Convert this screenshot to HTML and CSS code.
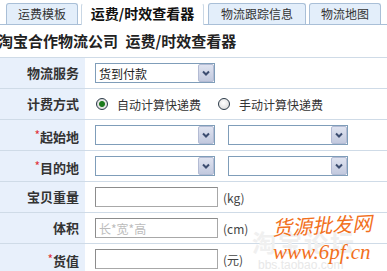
FILE: index.html
```html
<!DOCTYPE html>
<html lang="zh-CN">
<head>
    <meta charset="UTF-8">
    <title>运费/时效查看器</title>
    <link rel="stylesheet" href="styles.css">
</head>
<body>

<div class="tabs">
    <a class="tab tab-1">运费模板</a>
    <a class="tab tab-2 active">运费/时效查看器</a>
    <a class="tab tab-3">物流跟踪信息</a>
    <a class="tab tab-4">物流地图</a>
</div>

<h2 class="title">淘宝合作物流公司 运费/时效查看器</h2>

<div class="form">
    <div class="row">
        <div class="label">物流服务</div>
        <div class="field">
            <span class="select">
                <select><option>货到付款</option></select>
                <i class="arrow"><svg width="8" height="6" viewBox="0 0 8 6"><path d="M1 1.5 L4 4.5 L7 1.5" fill="none" stroke="#3c4d70" stroke-width="2"/></svg></i>
            </span>
        </div>
    </div>
    <div class="row">
        <div class="label">计费方式</div>
        <div class="field">
            <label class="radio"><input type="radio" name="fee" checked> 自动计算快递费</label>
            <label class="radio"><input type="radio" name="fee"> 手动计算快递费</label>
        </div>
    </div>
    <div class="row">
        <div class="label"><em>*</em>起始地</div>
        <div class="field">
            <span class="select">
                <select><option></option></select>
                <i class="arrow"><svg width="8" height="6" viewBox="0 0 8 6"><path d="M1 1.5 L4 4.5 L7 1.5" fill="none" stroke="#3c4d70" stroke-width="2"/></svg></i>
            </span>
            <span class="select">
                <select><option></option></select>
                <i class="arrow"><svg width="8" height="6" viewBox="0 0 8 6"><path d="M1 1.5 L4 4.5 L7 1.5" fill="none" stroke="#3c4d70" stroke-width="2"/></svg></i>
            </span>
        </div>
    </div>
    <div class="row">
        <div class="label"><em>*</em>目的地</div>
        <div class="field">
            <span class="select">
                <select><option></option></select>
                <i class="arrow"><svg width="8" height="6" viewBox="0 0 8 6"><path d="M1 1.5 L4 4.5 L7 1.5" fill="none" stroke="#3c4d70" stroke-width="2"/></svg></i>
            </span>
            <span class="select">
                <select><option></option></select>
                <i class="arrow"><svg width="8" height="6" viewBox="0 0 8 6"><path d="M1 1.5 L4 4.5 L7 1.5" fill="none" stroke="#3c4d70" stroke-width="2"/></svg></i>
            </span>
        </div>
    </div>
    <div class="row">
        <div class="label">宝贝重量</div>
        <div class="field">
            <input type="text" class="text">
            <span class="unit">(kg)</span>
        </div>
    </div>
    <div class="row">
        <div class="label">体积</div>
        <div class="field">
            <input type="text" class="text" placeholder="长*宽*高">
            <span class="unit">(cm)</span>
        </div>
    </div>
    <div class="row">
        <div class="label"><em>*</em>货值</div>
        <div class="field">
            <input type="text" class="text">
            <span class="unit">(元)</span>
        </div>
    </div>
</div>

<div class="watermark">
    <div class="wm-faint">淘宝论坛</div>
    <div class="wm-faint-url">bbs.taobao.com</div>
    <div class="wm-name">货源批发网</div>
    <div class="wm-url">www.6pf.cn</div>
</div>

</body>
</html>
```

FILE: styles.css
```css
body {
    margin: 0;
    background-color: #fff;
    font-family: "Noto Sans CJK SC", "Noto Sans", sans-serif;
    color: #333;
    font-size: 12px;
    overflow: hidden;
}
.tabs {
    display: flex;
    align-items: flex-end;
    height: 24px;
    padding-left: 6px;
    border-bottom: 1px solid #a9bfd7;
}
.tab {
    box-sizing: border-box;
    height: 21px;
    line-height: 19px;
    margin-right: 3px;
    border: 1px solid #a9bfd7;
    border-bottom: none;
    border-radius: 3px 3px 0 0;
    background-color: #e3eefa;
    text-align: center;
    font-size: 12px;
    color: #333;
}
.tab-1 { width: 72px; }
.tab-2 { width: 123px; }
.tab-3 { width: 98px; margin-left: 1px; }
.tab-4 { width: 72px; }
.tab.active {
    height: 22px;
    margin-bottom: -1px;
    background-color: #fff;
    border-color: #fff #c9d7e5;
    font-size: 14px;
    font-weight: bold;
    color: #111;
}
.title {
    margin: 0 0 0 -2px;
    height: 32px;
    line-height: 32px;
    font-size: 15px;
    font-weight: bold;
    word-spacing: 4px;
    color: #222;
    border-bottom: 1px solid #cfdbe7;
    white-space: nowrap;
}
.row {
    display: flex;
    height: 30px;
    border-bottom: 1px solid #cfdbe7;
}
.label {
    width: 85px;
    box-sizing: border-box;
    padding-right: 6px;
    background-color: #e8f0fb;
    text-align: right;
    font-size: 13px;
    font-weight: bold;
    line-height: 30px;
    color: #333;
}
.label em {
    font-style: normal;
    font-weight: normal;
    color: #e0303a;
    font-size: 12px;
    vertical-align: 2px;
}
.field {
    display: flex;
    align-items: center;
    padding-left: 10px;
    gap: 13px;
}
.select {
    position: relative;
    display: inline-block;
    width: 120px;
    height: 20px;
}
.select select {
    appearance: none;
    -webkit-appearance: none;
    box-sizing: border-box;
    width: 100%;
    height: 20px;
    margin: 0;
    padding: 0 0 0 3px;
    border: 1px solid #7f9db9;
    border-radius: 0;
    background-color: #fff;
    font-family: inherit;
    font-size: 12px;
    color: #222;
}
.arrow {
    position: absolute;
    right: 1px;
    top: 1px;
    box-sizing: border-box;
    width: 16px;
    height: 18px;
    border: 1px solid #b3bbd4;
    border-radius: 2px;
    background: linear-gradient(#dfe3f0, #c2c9de);
    display: flex;
    align-items: center;
    justify-content: center;
}
.radio {
    display: flex;
    align-items: center;
    font-size: 12px;
    color: #333;
    margin-right: 3px;
}
.radio input {
    appearance: none;
    -webkit-appearance: none;
    width: 12px;
    height: 12px;
    margin: 0 9px 0 1px;
    border: 1px solid #2b3a48;
    border-radius: 50%;
    background: radial-gradient(circle at 45% 40%, #fff, #d4d4d4);
}
.radio input:checked {
    background: radial-gradient(circle, #1c7a1c 0 2.5px, #e6e6e6 3.5px, #cfcfcf);
}
.text {
    box-sizing: border-box;
    width: 123px;
    height: 20px;
    margin: 0;
    padding: 0 3px;
    border: 1px solid #a8a8a8;
    border-top-color: #8c8c8c;
    border-left-color: #8c8c8c;
    font-family: inherit;
    font-size: 12px;
}
.text::placeholder {
    color: #bcbcbc;
}
.unit {
    margin-left: -8px;
    font-size: 12px;
    color: #444;
}
.watermark {
    position: absolute;
    left: 248px;
    top: 212px;
    width: 139px;
    height: 59px;
    pointer-events: none;
}
.wm-faint {
    position: absolute;
    left: 4px;
    top: 12px;
    font-size: 24px;
    font-weight: bold;
    color: #f0f0f0;
    letter-spacing: 2px;
}
.wm-faint-url {
    position: absolute;
    left: 10px;
    top: 46px;
    font-family: "Liberation Sans", sans-serif;
    font-size: 12px;
    color: #e8e8e8;
}
.wm-name {
    position: absolute;
    left: 24px;
    top: 1px;
    font-size: 20px;
    line-height: 24px;
    color: #f2701c;
    font-style: italic;
    transform: rotate(-3deg);
}
.wm-url {
    position: absolute;
    left: 25px;
    top: 28px;
    font-family: "Liberation Serif", serif;
    font-size: 21px;
    line-height: 24px;
    font-style: italic;
    color: #f2701c;
}
```
